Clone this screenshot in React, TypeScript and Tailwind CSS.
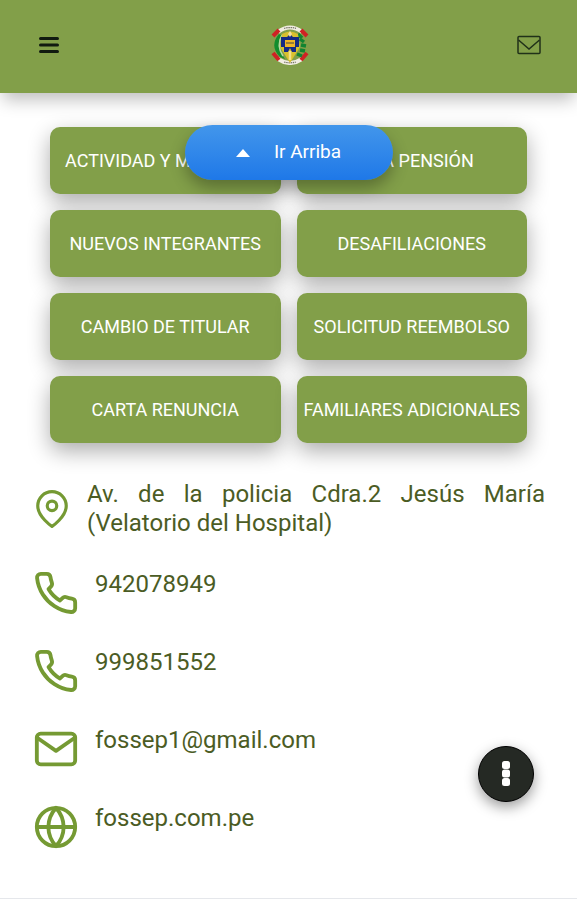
import { FiGlobe, FiMail, FiMapPin, FiPhone } from "react-icons/fi";

const services = [
  "ACTIVIDAD Y MONTEPIO",
  "BAJA PENSIÓN",
  "NUEVOS INTEGRANTES",
  "DESAFILIACIONES",
  "CAMBIO DE TITULAR",
  "SOLICITUD REEMBOLSO",
  "CARTA RENUNCIA",
  "FAMILIARES ADICIONALES",
];

const contacts = [
  { icon: FiPhone, label: "942078949", href: "tel:942078949" },
  { icon: FiPhone, label: "999851552", href: "tel:999851552" },
  { icon: FiMail, label: "fossep1@gmail.com", href: "mailto:fossep1@gmail.com" },
  { icon: FiGlobe, label: "fossep.com.pe", href: "https://fossep.com.pe" },
];

function Crest() {
  return (
    <svg viewBox="0 0 40 40" className="size-10" aria-hidden>
      <g fill="none">
        <path d="M8 7Q20-2 32 7" stroke="#f1ede2" strokeWidth="4" />
        <path d="M8 34Q20 42 32 34" stroke="#f1ede2" strokeWidth="4" />
        <path d="M14 3.300Q20 1.800 26 3.300M14 37Q20 38.600 26 37" stroke="#777868" strokeWidth="1.200" strokeDasharray="1.500 .7" />
        <path d="M3 11 9 5M31 5l6 6M3 28l6 7M31 35l6-7" stroke="#cf2224" strokeWidth="4" />
      </g>
      <path d="M9 9Q-1 21 10 32L15 34Q5 22 11 10Z" fill="#128d2d" />
      <path d="M12 10Q6 21 13 31" fill="none" stroke="#b8dba2" strokeWidth="1.500" />
      <path d="M28 9l4 4M30 14l4 3M31 20l5 1M30 25l5 1M27 29l5 2" stroke="#118431" strokeWidth="3.400" />
      <path d="M12 9Q20 4 28 9L30 22 20 38 10 22Z" fill="#d8c02e" />
      <path d="M11 12h6l3-3 3 3h6v10h-3v5h-4l-2-4-2 4h-4v-5h-3Z" fill="#142a84" />
      <path d="M15 15h10v7H15Z" fill="#f0b426" />
      <path d="M16 18h8" stroke="#7d6a3a" strokeWidth="1.500" />
      <path d="m18 9 2-3 2 3-2 3Z" fill="#f3dfa0" />
      <path d="M20 26v9" stroke="#f1e08a" strokeWidth="2.500" />
    </svg>
  );
}

export default function App() {
  return (
    <div className="relative flex min-h-screen flex-col bg-white font-[Roboto,sans-serif]">
      <header className="flex h-[93px] items-center justify-between bg-[#829f49] px-9 pb-1 shadow-[0_10px_16px_-3px_rgba(0,0,0,0.25)]">
        <button type="button" aria-label="Menú" className="p-[3px]">
          <svg viewBox="0 0 20 18" className="h-[18px] w-5" aria-hidden>
            <path d="M1.500 2.500h17M1.500 9h17M1.500 15.500h17" stroke="#111b10" strokeWidth="3" strokeLinecap="round" />
          </svg>
        </button>
        <Crest />
        <a href="mailto:fossep1@gmail.com" aria-label="Correo">
          <svg viewBox="0 0 24 20" className="h-5 w-6" fill="none" stroke="#203119" strokeWidth="1.500" aria-hidden>
            <rect x="1" y="1.500" width="22" height="17" rx="1" />
            <path d="m1.500 5 10.500 9L22.500 5" />
          </svg>
        </a>
      </header>

      <button
        type="button"
        className="absolute inset-x-0 top-[125px] z-10 mx-auto flex h-[55px] w-52 items-center justify-center gap-6 rounded-full bg-linear-to-b from-[#4296eb] to-[#1e78e8] text-[19px] text-white shadow-[0_8px_16px_rgba(0,0,0,0.3)]"
      >
        <svg viewBox="0 0 14 8" className="h-2 w-3.5" fill="currentColor" aria-hidden>
          <path d="M7 0l7 8H0z" />
        </svg>
        Ir Arriba
      </button>

      <main>
        <nav className="grid grid-cols-2 gap-4 px-[50px] pt-[34px]">
          {services.map((service) => (
            <button
              key={service}
              type="button"
              className="h-[67px] rounded-[10px] bg-[#829f49] text-lg whitespace-nowrap text-white shadow-[0_8px_22px_rgba(0,0,0,0.33)]"
            >
              {service}
            </button>
          ))}
        </nav>

        <address className="pt-[37px] pr-8 pl-[33px] text-2xl text-[#4b5c24] not-italic">
          <div className="flex items-center gap-4">
            <FiMapPin className="size-[38px] shrink-0 text-[#759a33]" aria-hidden />
            <p className="flex-1 text-justify leading-[29px]">
              Av. de la policia Cdra.2 Jesús María (Velatorio del Hospital)
            </p>
          </div>
          <ul className="mt-8 space-y-8">
            {contacts.map(({ icon: Icon, label, href }) => (
              <li key={label}>
                <a href={href} className="flex gap-4 leading-[29px]">
                  <Icon className="size-[46px] shrink-0 text-[#759a33]" aria-hidden />
                  {label}
                </a>
              </li>
            ))}
          </ul>
        </address>
      </main>

      <footer className="mt-auto h-0.5 border-t border-gray-200" />

      <button
        type="button"
        aria-label="Más opciones"
        className="fixed right-[43px] bottom-[98px] flex size-14 items-center justify-center rounded-full border border-black bg-[#252924] shadow-[0_5px_14px_rgba(0,0,0,0.4)]"
      >
        <svg viewBox="0 0 8 26" className="h-[26px] w-2" fill="#fff" aria-hidden>
          <rect width="8" height="8" rx="2.500" />
          <rect y="8.500" width="8" height="8" rx="2.500" />
          <rect y="17" width="8" height="8" rx="2.500" />
        </svg>
      </button>
    </div>
  );
}
